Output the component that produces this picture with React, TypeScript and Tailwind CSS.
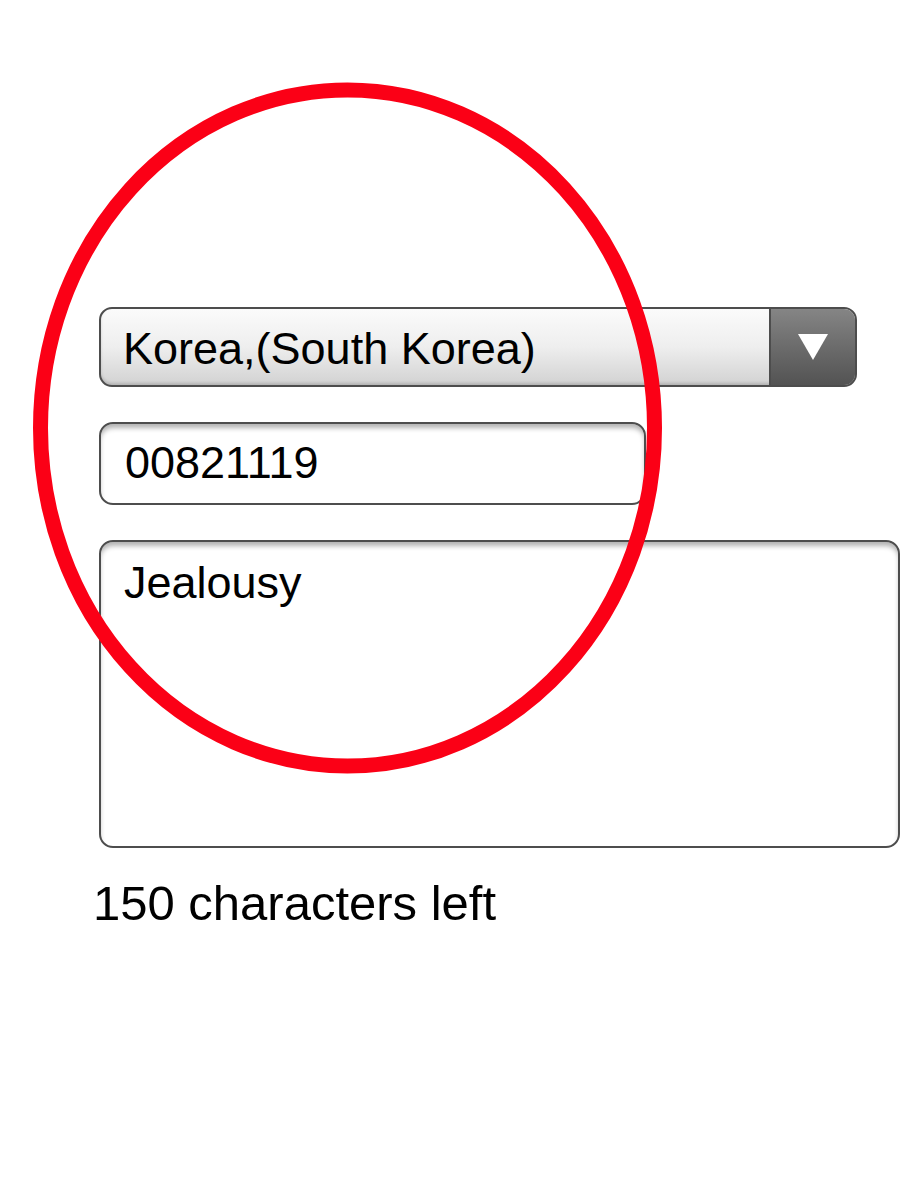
import React from "react";

export default function App() {
  const font = { fontFamily: '"Liberation Sans", Arial, Helvetica, sans-serif' };
  return (
    <div className="relative min-h-[1200px] w-[912px] bg-white text-black" style={font}>
      <div className="flex flex-col pl-[99px] pt-[307px]">
        {/* Select */}
        <div className="flex h-[80px] w-[758px] overflow-hidden rounded-[13px] border-2 border-[#4d4d4d] bg-gradient-to-b from-[#fbfbfb] via-[#eeeeee] to-[#d2d2d2] shadow-[inset_0_-2px_3px_rgba(0,0,0,0.15)]">
          <div className="flex-1 pl-[22px] pt-[14px] text-[45px] leading-[1.15]">
            Korea,(South Korea)
          </div>
          <div className="flex w-[86px] items-center justify-center border-l-2 border-[#4d4d4d] bg-gradient-to-b from-[#858585] to-[#535353]">
            <svg width="30" height="26" viewBox="0 0 30 26">
              <polygon points="0,0 30,0 15,26" fill="#ffffff" />
            </svg>
          </div>
        </div>

        {/* Input */}
        <div className="mt-[35px] h-[83px] w-[547px] rounded-[14px] border-2 border-[#4d4d4d] bg-white pl-[24px] pt-[13px] text-[45px] leading-[1.15] shadow-[inset_0_5px_5px_-1px_rgba(0,0,0,0.3)]">
          00821119
        </div>

        {/* Textarea */}
        <div className="mt-[35px] h-[308px] w-[801px] rounded-[14px] border-2 border-[#4d4d4d] bg-white pl-[23px] pt-[15px] text-[45px] leading-[1.15] shadow-[inset_0_5px_5px_-1px_rgba(0,0,0,0.3)]">
          Jealousy
        </div>

        <div className="ml-[-6px] mt-[27px] text-[49px] leading-[1.15]">150 characters left</div>
      </div>

      {/* Red annotation ellipse */}
      <svg
        className="pointer-events-none absolute left-0 top-0"
        width="912"
        height="1200"
        viewBox="0 0 912 1200"
      >
        <ellipse cx="347.5" cy="428" rx="307" ry="338" fill="none" stroke="#fb0016" strokeWidth="15" />
      </svg>
    </div>
  );
}
